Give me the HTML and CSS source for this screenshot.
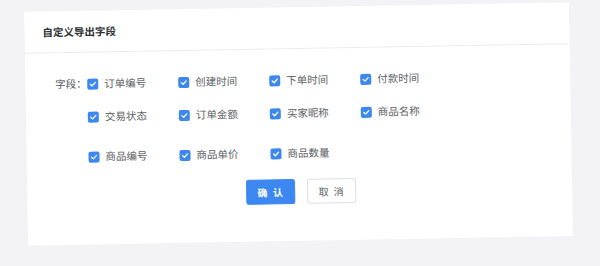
FILE: index.html
```html
<!DOCTYPE html>
<html lang="zh">
<head>
<meta charset="utf-8">
<link rel="stylesheet" href="styles.css">
</head>
<body>
<div class="stage">
  <div class="card">
    <div class="card-header">自定义导出字段</div>
    <div class="card-body">
      <div class="fields">
        <div class="field-label">字段：</div>
        <div class="field-rows">
          <div class="row r1">
            <label class="item"><span class="cb"><svg viewBox="0 0 11 11"><path d="M3 5.6 L4.8 7.3 L8 3.9" fill="none" stroke="#fff" stroke-width="1.3" stroke-linecap="round" stroke-linejoin="round"/></svg></span><span class="txt">订单编号</span></label>
            <label class="item"><span class="cb"><svg viewBox="0 0 11 11"><path d="M3 5.6 L4.8 7.3 L8 3.9" fill="none" stroke="#fff" stroke-width="1.3" stroke-linecap="round" stroke-linejoin="round"/></svg></span><span class="txt">创建时间</span></label>
            <label class="item"><span class="cb"><svg viewBox="0 0 11 11"><path d="M3 5.6 L4.8 7.3 L8 3.9" fill="none" stroke="#fff" stroke-width="1.3" stroke-linecap="round" stroke-linejoin="round"/></svg></span><span class="txt">下单时间</span></label>
            <label class="item"><span class="cb"><svg viewBox="0 0 11 11"><path d="M3 5.6 L4.8 7.3 L8 3.9" fill="none" stroke="#fff" stroke-width="1.3" stroke-linecap="round" stroke-linejoin="round"/></svg></span><span class="txt">付款时间</span></label>
          </div>
          <div class="row r2">
            <label class="item"><span class="cb"><svg viewBox="0 0 11 11"><path d="M3 5.6 L4.8 7.3 L8 3.9" fill="none" stroke="#fff" stroke-width="1.3" stroke-linecap="round" stroke-linejoin="round"/></svg></span><span class="txt">交易状态</span></label>
            <label class="item"><span class="cb"><svg viewBox="0 0 11 11"><path d="M3 5.6 L4.8 7.3 L8 3.9" fill="none" stroke="#fff" stroke-width="1.3" stroke-linecap="round" stroke-linejoin="round"/></svg></span><span class="txt">订单金额</span></label>
            <label class="item"><span class="cb"><svg viewBox="0 0 11 11"><path d="M3 5.6 L4.8 7.3 L8 3.9" fill="none" stroke="#fff" stroke-width="1.3" stroke-linecap="round" stroke-linejoin="round"/></svg></span><span class="txt">买家昵称</span></label>
            <label class="item"><span class="cb"><svg viewBox="0 0 11 11"><path d="M3 5.6 L4.8 7.3 L8 3.9" fill="none" stroke="#fff" stroke-width="1.3" stroke-linecap="round" stroke-linejoin="round"/></svg></span><span class="txt">商品名称</span></label>
          </div>
          <div class="row r3">
            <label class="item"><span class="cb"><svg viewBox="0 0 11 11"><path d="M3 5.6 L4.8 7.3 L8 3.9" fill="none" stroke="#fff" stroke-width="1.3" stroke-linecap="round" stroke-linejoin="round"/></svg></span><span class="txt">商品编号</span></label>
            <label class="item"><span class="cb"><svg viewBox="0 0 11 11"><path d="M3 5.6 L4.8 7.3 L8 3.9" fill="none" stroke="#fff" stroke-width="1.3" stroke-linecap="round" stroke-linejoin="round"/></svg></span><span class="txt">商品单价</span></label>
            <label class="item"><span class="cb"><svg viewBox="0 0 11 11"><path d="M3 5.6 L4.8 7.3 L8 3.9" fill="none" stroke="#fff" stroke-width="1.3" stroke-linecap="round" stroke-linejoin="round"/></svg></span><span class="txt">商品数量</span></label>
          </div>
        </div>
      </div>
      <div class="actions">
        <button class="btn btn-primary">确 认</button>
        <button class="btn btn-default">取 消</button>
      </div>
    </div>
  </div>
</div>
</body>
</html>
```

FILE: styles.css
```css
html, body {
  margin: 0;
  padding: 0;
}
body {
  width: 600px;
  height: 266px;
  overflow: hidden;
  background: #f3f3f5;
  font-family: "Noto Sans CJK SC", "Noto Sans", sans-serif;
}
.stage {
  padding-top: 7px;
  padding-left: 26px;
}
.card {
  width: 545px;
  height: 234px;
  background: #ffffff;
  transform: rotate(-1deg);
  transform-origin: 50% 50%;
  box-shadow: 0 0 1px rgba(0,0,0,0.04);
}
.card-header {
  height: 40px;
  line-height: 40px;
  padding-left: 18px;
  padding-top: 1px;
  border-bottom: 1px solid #ebedf0;
  font-size: 10.5px;
  font-weight: 700;
  color: #303133;
}
.card-body {
  padding-top: 21px;
}
.fields {
  display: flex;
  padding-left: 30px;
}
.field-label {
  width: 32px;
  height: 20px;
  line-height: 20px;
  font-size: 10.5px;
  color: #555a61;
}
.field-rows {
  display: flex;
  flex-direction: column;
}
.row {
  display: flex;
  height: 20px;
}
.r2 { margin-top: 13px; }
.r3 { margin-top: 20px; }
.item {
  width: 91px;
  display: flex;
  align-items: center;
  gap: 6px;
}
.cb {
  width: 11px;
  height: 11px;
  border-radius: 2px;
  background: #3d87f0;
  display: block;
}
.cb svg {
  width: 11px;
  height: 11px;
  display: block;
}
.txt {
  font-size: 10.5px;
  color: #606266;
  line-height: 20px;
  white-space: nowrap;
}
.actions {
  display: flex;
  justify-content: center;
  gap: 12px;
  margin-top: 16px;
  padding-left: 2px;
}
.btn {
  width: 49px;
  height: 25px;
  border-radius: 3px;
  font-family: "Noto Sans CJK SC", "Noto Sans", sans-serif;
  font-size: 10px;
  letter-spacing: 1.5px;
  padding: 0 0 0 1.5px;
  cursor: pointer;
}
.btn-primary {
  background: #3d87f0;
  border: 1px solid #3d87f0;
  color: #ffffff;
  font-weight: 700;
}
.btn-default {
  background: #ffffff;
  border: 1px solid #dcdfe6;
  color: #606266;
}
```
